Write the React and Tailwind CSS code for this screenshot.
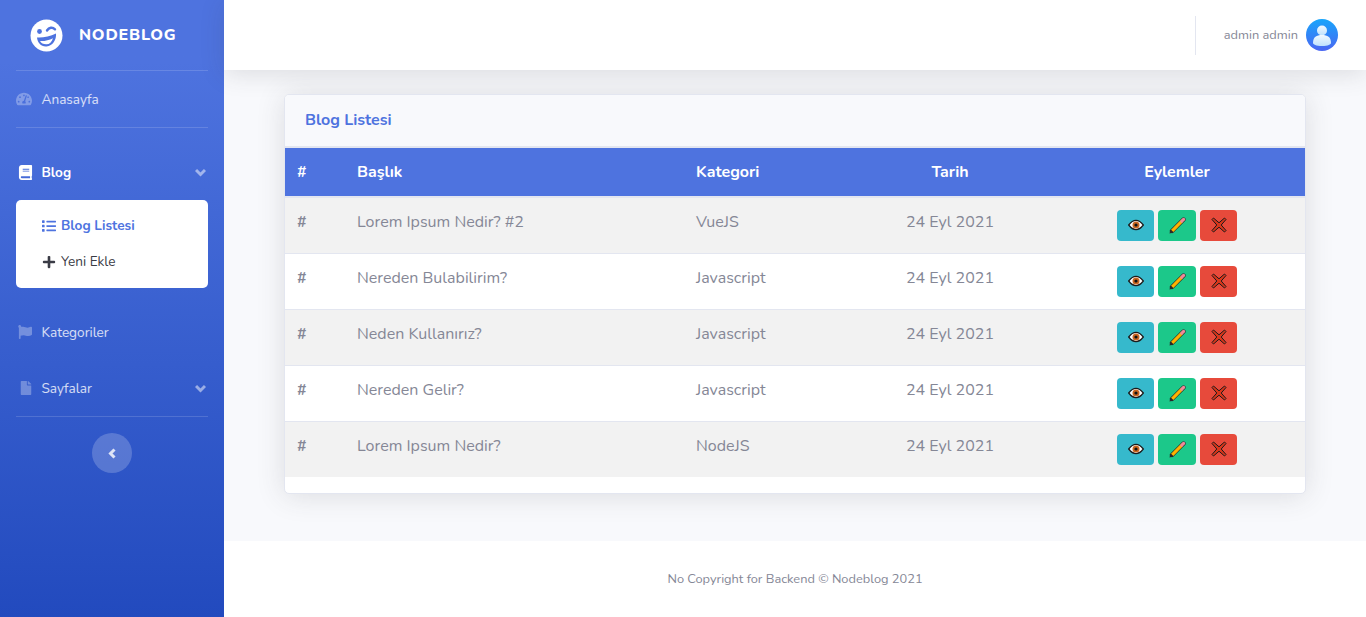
import { FaBook, FaFlag, FaFile, FaTachometerAlt, FaList, FaPlus } from "react-icons/fa";

const posts = [
  { title: "Lorem Ipsum Nedir? #2", category: "VueJS" },
  { title: "Nereden Bulabilirim?", category: "Javascript" },
  { title: "Neden Kullanırız?", category: "Javascript" },
  { title: "Nereden Gelir?", category: "Javascript" },
  { title: "Lorem Ipsum Nedir?", category: "NodeJS" },
];

function Logo() {
  return (
    <svg width="33" height="33" viewBox="0 0 33 33">
      <circle cx="16.5" cy="16.5" r="16" fill="#fff" />
      <circle cx="9.5" cy="12.5" r="2.4" fill="#4e73df" />
      <path d="M17 11.5c2-3.2 5.5-3.6 8-1.2" fill="none" stroke="#4e73df" strokeWidth="2.4" strokeLinecap="round" />
      <path d="M7 18.5c5 .6 13-1 19-4 .6 6-3 12.5-9.5 13C11 27.900 7.500 23.500 7 18.500z" fill="#4e73df" />
      <path d="M10 22c4 .4 9-.8 13-2.800-1.200 3.800-3.500 6-6.500 6.100-3 .1-5.300-1.100-6.500-3.300z" fill="#fff" />
    </svg>
  );
}

function Avatar() {
  return (
    <svg width="32" height="32" viewBox="0 0 32 32">
      <defs>
        <linearGradient id="avatarBg" x1="0" y1="0" x2="0" y2="1">
          <stop offset="0" stopColor="#18a5fb" />
          <stop offset="1" stopColor="#4a66f2" />
        </linearGradient>
        <linearGradient id="avatarFg" x1="0" y1="0" x2="0" y2="1">
          <stop offset="0" stopColor="#f2f9ff" />
          <stop offset="1" stopColor="#bfe2fd" />
        </linearGradient>
      </defs>
      <circle cx="16" cy="16" r="16" fill="url(#avatarBg)" />
      <circle cx="16" cy="11.500" r="5" fill="url(#avatarFg)" />
      <path d="M7 24c0-6 3.500-8 9-8s9 2 9 8c0 1.500-3 3-9 3s-9-1.500-9-3z" fill="url(#avatarFg)" />
    </svg>
  );
}

function EyeIcon() {
  return (
    <svg width="16" height="16" viewBox="0 0 16 16">
      <path d="M.7 8C3 5 5.500 3.400 8 3.400S13 5 15.300 8C13 11 10.500 12.600 8 12.600S3 11 .7 8z" fill="#fff" stroke="#1c1c1c" strokeWidth="1.300" />
      <circle cx="8" cy="8" r="3.500" fill="#c8651f" />
      <circle cx="8" cy="8" r="1.600" fill="#111" />
    </svg>
  );
}

function PencilIcon() {
  return (
    <svg width="17" height="17" viewBox="0 0 17 17">
      <path d="M3 14L14.500 2.500" fill="none" stroke="#2a2a2a" strokeWidth="4.400" strokeLinecap="round" />
      <path d="M3.200 13.800L12.600 4.400" fill="none" stroke="#ffb300" strokeWidth="3.200" />
      <path d="M12.800 4.200L14.600 2.400" fill="none" stroke="#ef8a9a" strokeWidth="3.200" strokeLinecap="round" />
      <path d="M.5 16.500l.9-3.600 2.700 2.700z" fill="#2a2a2a" />
    </svg>
  );
}

function CrossIcon() {
  return (
    <svg width="16" height="16" viewBox="0 0 16 16">
      <path d="M2.500 1L8 5.800 13.500 1 15 2.500 10.200 8 15 13.500 13.500 15 8 10.200 2.500 15 1 13.500 5.800 8 1 2.500z" fill="#d8361a" stroke="#1b1b1b" strokeWidth="1" strokeLinejoin="round" />
    </svg>
  );
}

function Chevron({ left }) {
  return (
    <svg width="11" height="11" viewBox="0 0 11 11" fill="none" stroke="currentColor" strokeWidth="3">
      <path d={left ? "M7.500 1.500L3.500 5.500 7.500 9.500" : "M1 3l4.500 4.500L10 3"} />
    </svg>
  );
}

function Divider() {
  return <hr className="mx-4 border-t border-white/15" />;
}

function NavItem({ icon, label, active, arrow }) {
  return (
    <div className={`flex h-14 items-center px-4 text-[13.600px] ${active ? "font-bold text-white" : "text-white/80"}`}>
      <span className={`flex w-[25.500px] shrink-0 ${active ? "text-white" : "text-white/30"}`}>{icon}</span>
      <span className="pt-[2px]">{label}</span>
      {arrow && <span className="ml-auto mr-[2px] flex text-white/50"><Chevron /></span>}
    </div>
  );
}

export default function App() {
  return (
    <div className="flex min-h-[617px] bg-[#f8f9fc] font-['Nunito','Noto_Sans',sans-serif] text-[#858796]">
      <aside className="flex w-[224px] shrink-0 flex-col bg-gradient-to-b from-[#4e73df] from-10% to-[#224abe]">
        <div className="flex h-[70px] items-center pl-[30px]">
          <Logo />
          <span className="ml-4 text-[16px] font-extrabold tracking-[0.050em] text-white">NODEBLOG</span>
        </div>
        <Divider />
        <NavItem icon={<FaTachometerAlt size={16} />} label="Anasayfa" />
        <Divider />
        <div className="h-4" />
        <NavItem icon={<FaBook size={15} className="ml-[2px]" />} label="Blog" active arrow />
        <div className="mx-4 rounded-[5px] bg-white py-2 text-[13.600px]">
          <div className="flex h-9 items-center pl-[26px] font-bold text-[#4e73df]">
            <FaList size={14} className="mr-[5px]" />
            Blog Listesi
          </div>
          <div className="flex h-9 items-center pl-[26px] text-[#3a3b45]">
            <FaPlus size={14} className="mr-[5px]" />
            Yeni Ekle
          </div>
        </div>
        <div className="h-4" />
        <NavItem icon={<FaFlag size={14} className="ml-[2px]" />} label="Kategoriler" />
        <NavItem icon={<FaFile size={14} className="ml-[3px]" />} label="Sayfalar" arrow />
        <Divider />
        <div className="flex justify-center pt-4">
          <div className="flex h-10 w-10 items-center justify-center rounded-full bg-white/20 text-white/80">
            <Chevron left />
          </div>
        </div>
      </aside>

      <div className="flex min-w-0 flex-1 flex-col">
        <header className="flex h-[70px] items-center justify-end bg-white pr-7 shadow-[0_4px_24px_rgba(58,59,69,0.15)]">
          <div className="mr-7 h-[39px] w-px bg-[#e3e6f0]" />
          <span className="mr-2 pt-px text-[12.800px]">admin admin</span>
          <Avatar />
        </header>

        <main className="flex-1 px-[60px] pt-6">
          <div className="overflow-hidden rounded-[5px] border border-[#e3e6f0] bg-white pb-4 shadow-[0_2px_28px_rgba(58,59,69,0.15)]">
            <div className="flex h-[53px] items-center border-b-2 border-[#e3e6f0] bg-[#f8f9fc] px-5 pb-[2px] text-[16px] font-bold text-[#4e73df]">
              Blog Listesi
            </div>
            <table className="w-full table-fixed border-collapse text-[16px]">
              <thead>
                <tr className="h-[49px] border-b-2 border-[#e3e6f0] bg-[#4e73df] text-white">
                  <th className="w-[60px] px-3 text-left font-bold">#</th>
                  <th className="w-[339px] px-3 text-left font-bold">Başlık</th>
                  <th className="w-[167px] px-3 text-left font-bold">Kategori</th>
                  <th className="w-[198px] px-3 text-center font-bold">Tarih</th>
                  <th className="px-3 text-center font-bold">Eylemler</th>
                </tr>
              </thead>
              <tbody>
                {posts.map((post, i) => (
                  <tr key={post.title} className={`h-14 border-t border-[#e3e6f0] ${i % 2 === 0 ? "bg-[#f2f2f2]" : "bg-white"}`}>
                    <td className="px-3 pb-[7px] font-bold">#</td>
                    <td className="px-3 pb-[7px]">{post.title}</td>
                    <td className="px-3 pb-[7px]">{post.category}</td>
                    <td className="px-3 pb-[7px] text-center">24 Eyl 2021</td>
                    <td className="px-3">
                      <div className="flex justify-center gap-1">
                        <span className="flex h-[31px] w-[37px] items-center justify-center rounded-[4px] bg-[#36b9cc]"><EyeIcon /></span>
                        <span className="flex h-[31px] w-[38px] items-center justify-center rounded-[4px] bg-[#1cc88a]"><PencilIcon /></span>
                        <span className="flex h-[31px] w-[37px] items-center justify-center rounded-[4px] bg-[#e74a3b]"><CrossIcon /></span>
                      </div>
                    </td>
                  </tr>
                ))}
              </tbody>
            </table>
          </div>
        </main>

        <footer className="flex h-[76px] items-center justify-center bg-white pt-[2px] text-[12.800px]">
          No Copyright for Backend © Nodeblog 2021
        </footer>
      </div>
    </div>
  );
}
